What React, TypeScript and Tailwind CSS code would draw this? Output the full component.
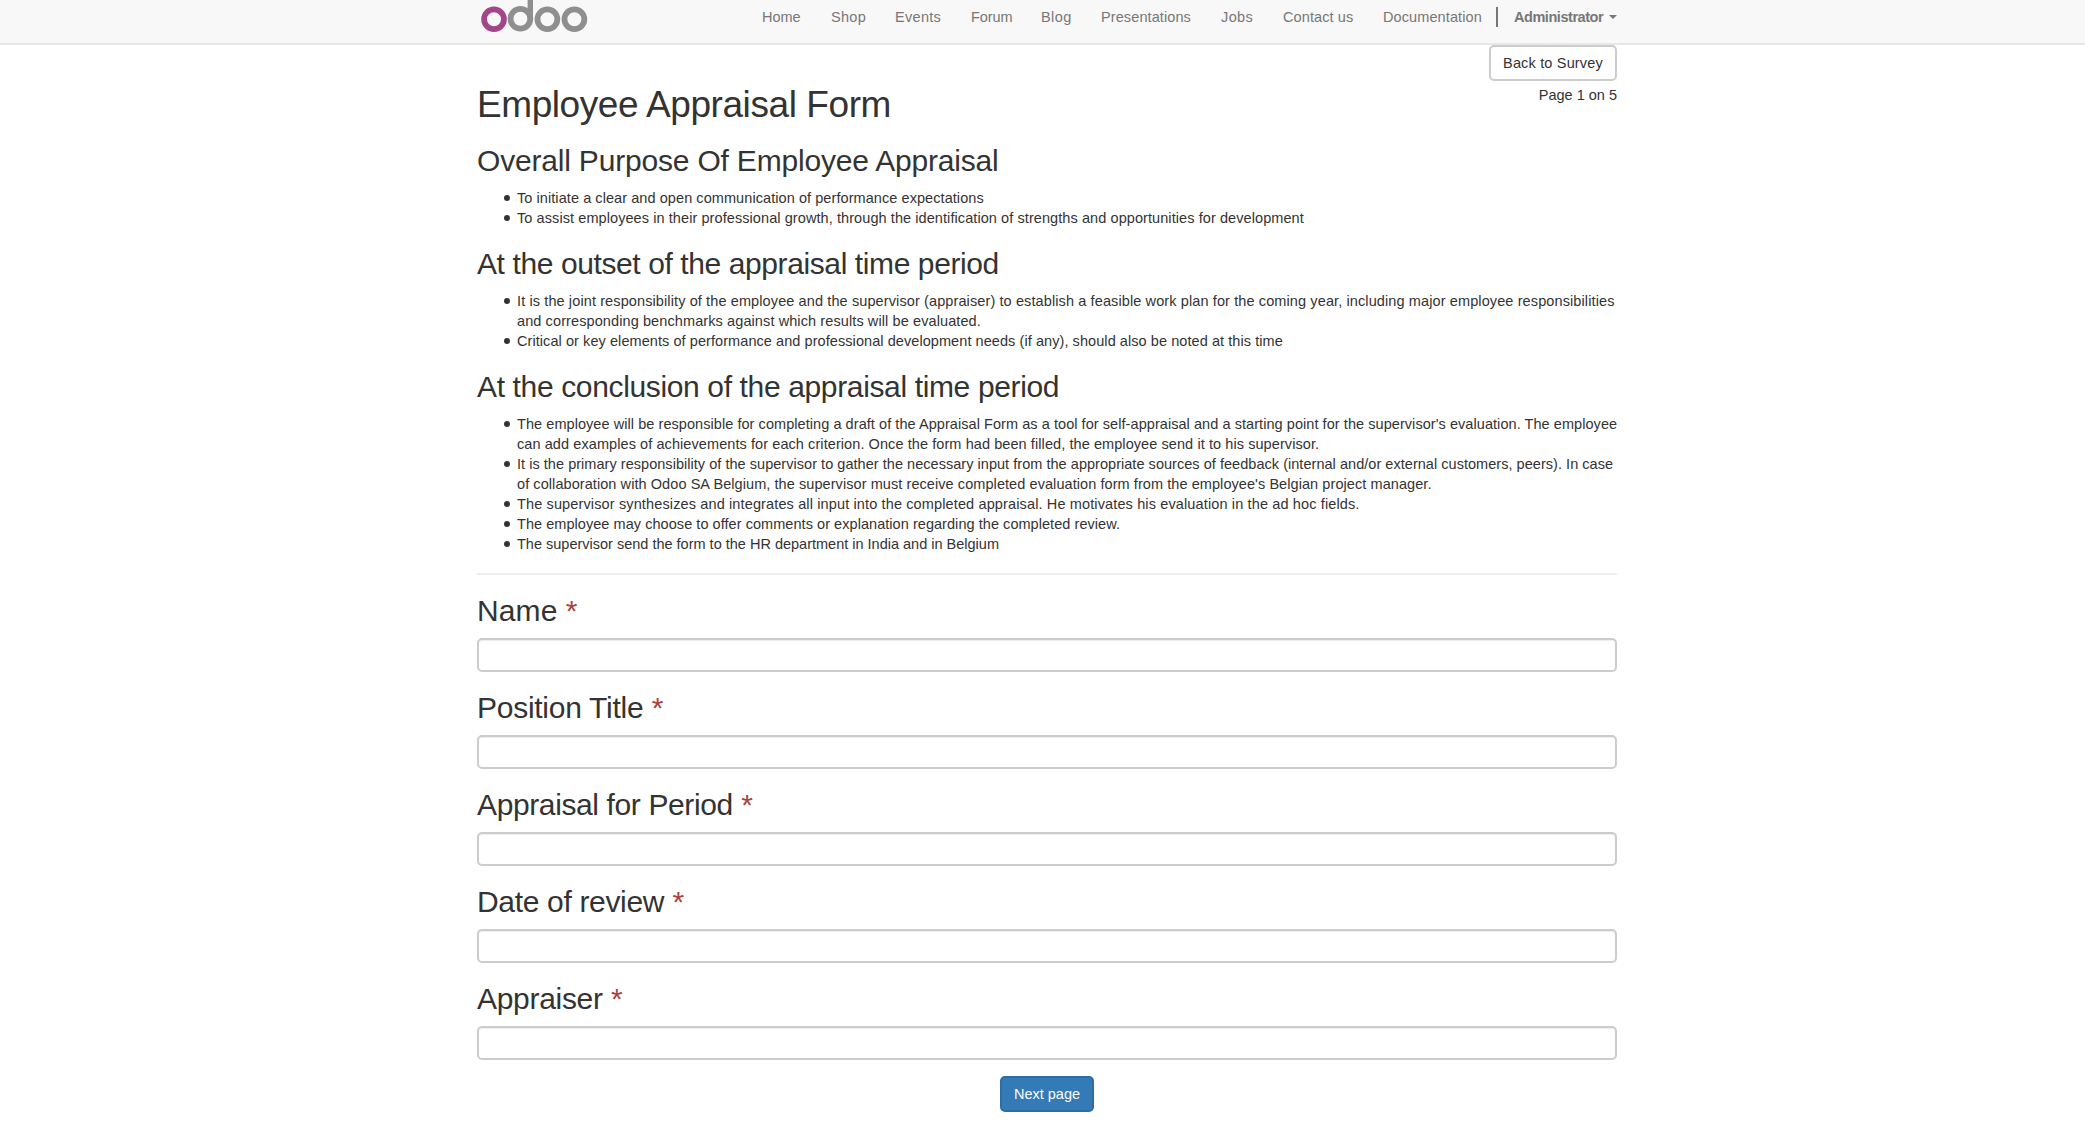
type NavEntry = { label: string; className: string };

const NAV: NavEntry[] = [
  { label: 'Home', className: 'w-[69px]' },
  { label: 'Shop', className: 'w-16 tracking-[0.3px]' },
  { label: 'Events', className: 'w-[76px] tracking-[0.3px]' },
  { label: 'Forum', className: 'w-[70px] tracking-[-0.1px]' },
  { label: 'Blog', className: 'w-[60px] tracking-[0.4px]' },
  { label: 'Presentations', className: 'w-[120px] tracking-[0.1px]' },
  { label: 'Jobs', className: 'w-[62px] tracking-[0.4px]' },
  { label: 'Contact us', className: 'w-[100px] tracking-[0.1px]' },
  { label: 'Documentation', className: 'w-[113px] tracking-[0.1px]' },
];

type Line = { text: string; className: string };
type Section = { title: string; titleClass: string; items: Line[][] };

const SECTIONS: Section[] = [
  {
    title: 'Overall Purpose Of Employee Appraisal',
    titleClass: 'tracking-[-0.19px]',
    items: [
      [{ text: 'To initiate a clear and open communication of performance expectations', className: 'tracking-[0.07px]' }],
      [
        {
          text: 'To assist employees in their professional growth, through the identification of strengths and opportunities for development',
          className: 'tracking-[0.08px]',
        },
      ],
    ],
  },
  {
    title: 'At the outset of the appraisal time period',
    titleClass: 'tracking-[-0.4px]',
    items: [
      [
        {
          text: 'It is the joint responsibility of the employee and the supervisor (appraiser) to establish a feasible work plan for the coming year, including major employee responsibilities',
          className: 'tracking-[0.11px]',
        },
        { text: 'and corresponding benchmarks against which results will be evaluated.', className: 'tracking-[0.1px]' },
      ],
      [
        {
          text: 'Critical or key elements of performance and professional development needs (if any), should also be noted at this time',
          className: 'tracking-[0.07px]',
        },
      ],
    ],
  },
  {
    title: 'At the conclusion of the appraisal time period',
    titleClass: 'tracking-[-0.36px]',
    items: [
      [
        {
          text: "The employee will be responsible for completing a draft of the Appraisal Form as a tool for self-appraisal and a starting point for the supervisor's evaluation. The employee",
          className: 'tracking-[0.06px]',
        },
        {
          text: 'can add examples of achievements for each criterion. Once the form had been filled, the employee send it to his supervisor.',
          className: 'tracking-[0.08px]',
        },
      ],
      [
        {
          text: 'It is the primary responsibility of the supervisor to gather the necessary input from the appropriate sources of feedback (internal and/or external customers, peers). In case',
          className: 'tracking-[0.037px]',
        },
        {
          text: "of collaboration with Odoo SA Belgium, the supervisor must receive completed evaluation form from the employee's Belgian project manager.",
          className: 'tracking-[0.072px]',
        },
      ],
      [
        {
          text: 'The supervisor synthesizes and integrates all input into the completed appraisal. He motivates his evaluation in the ad hoc fields.',
          className: 'tracking-[0.131px]',
        },
      ],
      [{ text: 'The employee may choose to offer comments or explanation regarding the completed review.', className: 'tracking-[0.05px]' }],
      [{ text: 'The supervisor send the form to the HR department in India and in Belgium', className: '' }],
    ],
  },
];

const QUESTIONS = [
  { label: 'Name', className: 'tracking-[0.1px]' },
  { label: 'Position Title', className: 'tracking-[-0.27px]' },
  { label: 'Appraisal for Period', className: 'tracking-[-0.38px]' },
  { label: 'Date of review', className: 'tracking-[-0.33px]' },
  { label: 'Appraiser', className: 'tracking-[-0.3px]' },
];

function Logo() {
  return (
    <svg className="ml-[3px] block" width="108" height="34" viewBox="0 0 108 34" fill="none" strokeWidth="5.8" role="img" aria-label="odoo">
      <circle cx="14" cy="19.2" r="9.9" stroke="#a24689" />
      <g stroke="#8f8f8f">
        <circle cx="40.4" cy="18.8" r="9.9" />
        <path d="M50.3 0V19" strokeWidth="5.4" />
        <circle cx="67.4" cy="19.2" r="9.9" />
        <circle cx="94.4" cy="19.2" r="9.9" />
      </g>
    </svg>
  );
}

function Header() {
  return (
    <header className="h-[45px] border-b-2 border-[#e7e7e7] bg-[#f8f8f8]">
      <div className="ml-[477px] flex w-[1140px] items-start justify-between">
        <Logo />
        <nav className="flex items-center pt-[7px] text-[#777]">
          {NAV.map((n) => (
            <a key={n.label} href="#" className={`shrink-0 whitespace-nowrap ${n.className}`}>
              {n.label}
            </a>
          ))}
          <a href="#" className="flex h-5 items-center border-l-2 border-[#777] pl-4 font-bold">
            <span className="w-[95px] tracking-[-0.45px] whitespace-nowrap">Administrator</span>
            <svg width="8" height="4" viewBox="0 0 8 4" className="block">
              <path d="M0 0H8L4 4Z" fill="#777" />
            </svg>
          </a>
        </nav>
      </div>
    </header>
  );
}

function SectionBlock({ title, titleClass, items }: Section) {
  return (
    <section className="mt-[19px]">
      <h2 className={`text-[30px] leading-[33px] ${titleClass}`}>{title}</h2>
      <ul className="mt-[11px]">
        {items.map((lines) => (
          <li key={lines[0].text} className="flex gap-[7px] pl-[27px]">
            <span className="mt-[7px] size-1.5 shrink-0 rounded-full bg-[#333]" />
            <div>
              {lines.map((l) => (
                <div key={l.text} className={`whitespace-nowrap ${l.className}`}>
                  {l.text}
                </div>
              ))}
            </div>
          </li>
        ))}
      </ul>
    </section>
  );
}

export default function App() {
  return (
    <div className="min-h-[1126px] bg-white font-['Liberation_Sans',Arial,sans-serif] text-[14.5px] leading-5 text-[#333]">
      <Header />
      <main className="ml-[477px] w-[1140px]">
        <div className="flex h-20 justify-between">
          <h1 className="mt-10 text-[37px] leading-10 tracking-[-0.42px]">Employee Appraisal Form</h1>
          <div className="flex flex-col items-end">
            <button className="h-9 w-32 rounded-[5px] border-2 border-[#ccc] bg-white tracking-[0.17px]">Back to Survey</button>
            <div className="mt-1">Page 1 on 5</div>
          </div>
        </div>
        {SECTIONS.map((s) => (
          <SectionBlock key={s.title} {...s} />
        ))}
        <hr className="mt-[19px] border-t-2 border-[#eee]" />
        <form>
          {QUESTIONS.map((q) => (
            <div key={q.label} className="mt-[19px]">
              <h2 className="text-[30px] leading-[33px]">
                <label className={q.className}>{q.label}</label> <span className="text-[#a94442]">*</span>
              </h2>
              <input
                aria-label={q.label}
                className="mt-[11px] block h-[34px] w-full rounded-[5px] border-2 border-[#ccc] bg-white px-4 shadow-[inset_0_1px_1px_rgba(0,0,0,0.075)]"
              />
            </div>
          ))}
          <div className="mt-4 flex justify-center">
            <button type="button" className="h-9 w-[94px] rounded-[5px] border-2 border-[#2e6da4] bg-[#337ab7] text-white">
              Next page
            </button>
          </div>
        </form>
      </main>
    </div>
  );
}
